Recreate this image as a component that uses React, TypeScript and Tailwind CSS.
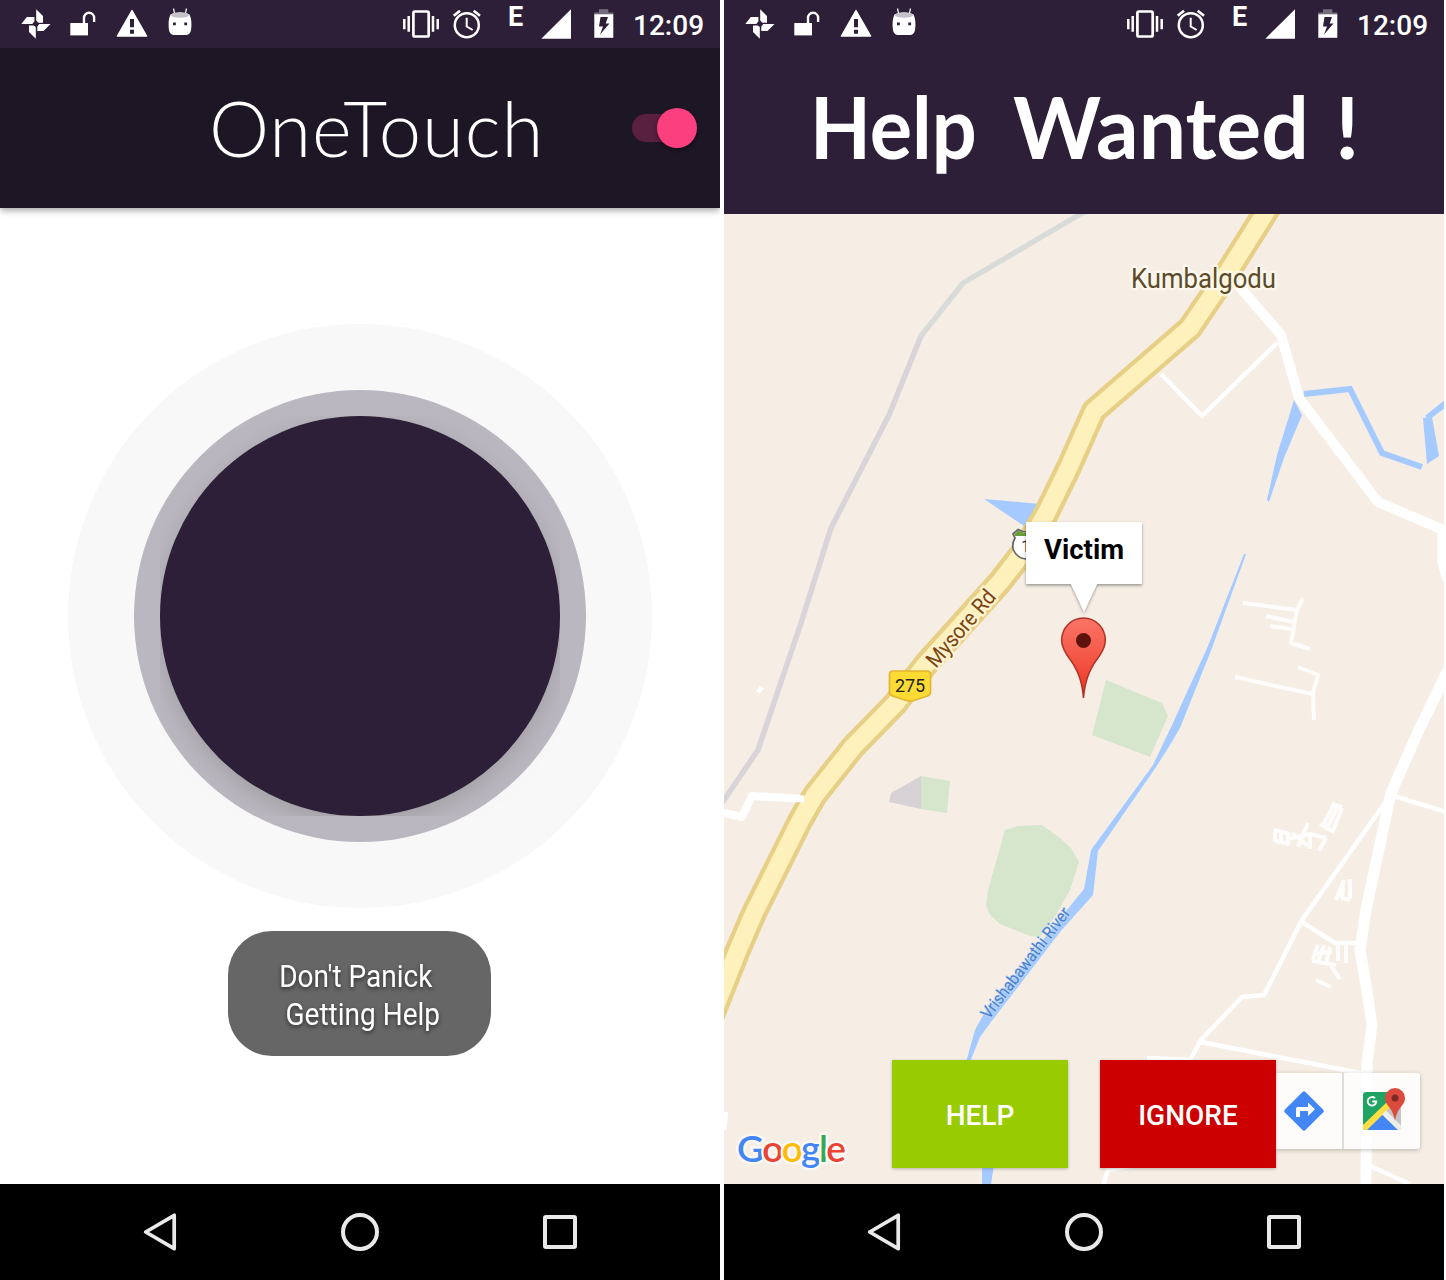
import React from "react";

function StatusBar() {
  return (
    <div className="relative z-20 flex h-12 w-full shrink-0 items-start bg-[#2d1f37] text-white">
      <svg className="ml-5 h-12 w-[176px]" viewBox="20 0 176 48" fill="currentColor">
        <path d="M36.2 9.2 43 16v6.8h-4.6l-2.2-2.4ZM21.3 24l5.5-7h7.600v4.600L32.200 24ZM35.800 38.800 29 32v-6.600h4.600l2.200 1.600ZM50.500 24l-7 7h-6.200v-4.600l2-2.400Z" />
        <path d="M70.300 23h17.700v12.400H70.300Z" />
        <path d="M84 23v-5.200a5 5 0 0 1 10.100 0V22" fill="none" stroke="currentColor" strokeWidth="2.400" />
        <path d="M132 10.600 146.600 36h-29.200Z" stroke="currentColor" strokeWidth="1.400" strokeLinejoin="round" />
        <path d="M130 19h4v8.300h-4ZM130 29.700h4v4h-4Z" fill="#2d1f37" />
        <path d="m173.500 8.500 1.300 6M186.500 8.500l-1.300 6" stroke="currentColor" strokeWidth="1.200" />
        <path d="M170.500 14.500c6-3 13-3 19 0 2 4 2.300 9 1.600 15-.7 4-2.600 5.500-5.600 5.500h-11c-3 0-4.900-1.500-5.600-5.500-.7-6-.4-11 1.600-15Z" />
        <ellipse cx="180" cy="15.300" rx="9" ry="2.500" fill="#c5c1c8" />
        <path d="M173 22.500h2.800v2.800H173ZM184.300 22.500h2.800v2.800h-2.800Z" fill="#2d1f37" />
      </svg>
      <svg className="ml-[206px] h-12 w-[82px]" viewBox="402 0 82 48" fill="none" stroke="currentColor">
        <rect x="413.400" y="11.500" width="15.300" height="25" rx="1.500" strokeWidth="2.700" />
        <path d="M408.700 16v15.700M433 16v15.700M404.300 19v10.300M437.700 19v10.300" strokeWidth="2.500" />
        <circle cx="466.800" cy="25.200" r="12" strokeWidth="2.500" />
        <path d="M466.700 17.700v8.800l6 3.500" strokeWidth="2" />
        <path d="m453.700 15.800 6.300-5M480 15.800l-6.300-5" strokeWidth="2.700" />
      </svg>
      <span className="ml-[24px] mt-[2px] w-5 font-['Roboto'] text-[27px] leading-[30px] font-bold">E</span>
      <svg className="ml-[12px] h-12 w-[76px]" viewBox="540 0 76 48" fill="currentColor">
        <path d="M541.300 38.800 571 9.200v29.600Z" />
        <path d="M594.300 12.500h4.700V9.300h9.300v3.200h5V15h-19Z" opacity=".35" />
        <path d="M594.300 14.300h19v23.500h-19Z" />
        <path d="M600.500 17h7.500l-2.300 6.500h3.800l-9.500 11 3-8h-4Z" fill="#2d1f37" />
      </svg>
      <span className="ml-[17px] mt-[10px] font-['Roboto'] text-[28px] leading-8 font-medium">12:09</span>
    </div>
  );
}

function NavBar() {
  return (
    <div className="flex h-24 w-full shrink-0 items-center bg-black px-[60px] text-[#e9e9e9]">
      <div className="flex flex-1 justify-center">
        <svg className="h-12 w-12" viewBox="136 1208 48 48" fill="none" stroke="currentColor" strokeWidth="3.700" strokeLinejoin="round">
          <path d="M174.200 1215.300v33.400l-28.500-16.700Z" />
        </svg>
      </div>
      <div className="flex flex-1 justify-center">
        <div className="size-[38px] rounded-full border-4 border-[#e9e9e9]" />
      </div>
      <div className="flex flex-1 justify-center">
        <div className="size-[34px] rounded-[3px] border-4 border-[#e9e9e9]" />
      </div>
    </div>
  );
}

function HomeScreen() {
  return (
    <section className="flex h-[1280px] w-[720px] flex-col overflow-hidden bg-white">
      <StatusBar />
      <header className="z-10 flex h-40 w-full shrink-0 items-center bg-[#1d1624] shadow-[0_2px_7px_rgba(0,0,0,0.4)]">
        <h1 className="ml-[209px] w-[423px] whitespace-nowrap font-['Lato'] text-[76px] leading-[88px] font-light tracking-[0.9px] text-white">
          OneTouch
        </h1>
        <div className="relative h-10 w-[65px]">
          <div className="mt-[6px] h-7 w-[60px] rounded-full bg-[#59203f]" />
          <div className="absolute top-0 right-0 size-10 rounded-full bg-[#fc407f] shadow-[0_2px_4px_rgba(0,0,0,0.4)]" />
        </div>
      </header>
      <main className="flex flex-1 flex-col items-center pt-[116px]">
        <div className="flex size-[584px] items-center justify-center rounded-full bg-[#f8f8f8]">
          <div className="flex size-[452px] items-center justify-center rounded-full bg-[#bbb7c1]">
            <div className="size-[400px] overflow-hidden">
              <div className="size-[400px] rounded-full bg-[#2d1f37] shadow-[0_7px_22px_rgba(150,150,150,0.7)]" />
            </div>
          </div>
        </div>
        <div className="mt-[23px] mr-[2px] flex h-[125px] w-[263px] items-center justify-center rounded-[44px] bg-[#666]">
          <p className="origin-center scale-x-[0.875] whitespace-pre pt-[2px] text-center font-['Roboto'] text-[32px] leading-[38px] text-white [text-shadow:0_2px_5px_rgba(0,0,0,0.6)]">
            {"Don't Panick \n Getting Help"}
          </p>
        </div>
      </main>
      <NavBar />
    </section>
  );
}

const ROAD =
  "M1272 202 1228 272 1190 328 1094 411 1069 467 1046 514 1024 551 1000 582 927 663 895 704 853 747 815 795 800 821 777 867 754 913 738 950 724 985 708 1025";

function MapDrawing() {
  return (
    <svg className="h-[970px] w-[720px]" viewBox="724 214 720 970" fill="none">
      <defs>
        <linearGradient id="pin" x1="0" y1="0" x2="0" y2="1">
          <stop offset="0" stopColor="#fb7567" />
          <stop offset=".6" stopColor="#f2503f" />
          <stop offset="1" stopColor="#e8321f" />
        </linearGradient>
        <filter id="lift" x="-20%" y="-20%" width="140%" height="150%">
          <feDropShadow dx="0" dy="1.500" stdDeviation="1.500" floodOpacity=".4" />
        </filter>
      </defs>
      <path d="M724 214h720v970H724Z" fill="#f6eee5" />
      <path d="M1084 212 963 283 921 336" stroke="#d9dbd8" strokeWidth="5.500" />
      <path d="M921 336 889 415 831 528 801 623 758 750 722 803" stroke="#d8d5d9" strokeWidth="5.500" />
      <g fill="#d6e6cd">
        <path d="M1106 680 1162 703 1168 716 1150 757 1092 735ZM921 776 950 781 947 813 921 809Z" />
        <path d="M1005 830 1018 826 1042 825 1060 838 1071 848 1079 862 1070 890 1056 915 1040 937 1030 936 1000 924 990 915 986 905 988 890Z" />
      </g>
      <path d="M921 776 891 793 889 802 921 809Z" fill="#d6d2d5" />
      <g fill="#a5caff">
        <path d="M984 499 1040 504 1030 530ZM1294 400 1302 415 1284 458 1269 502 1267 500 1277 455ZM1423 418 1432 417 1439 456 1427 464Z" />
        <path d="M1244 554 1246 554 1212 648 1180 728 1170 745 1156 767 1098 851 1093 895 1060 932 991 1022 980 1037 970 1062 966 1062 975 1030 982 1017 1058 921 1084 889 1091 850 1153 765 1172 725 1208 646Z" />
        <path d="M982 1165h12l-3 19h-9Z" />
      </g>
      <path d="M1304 394 1350 389 1382 453 1422 467M1446 403 1427 418" stroke="#a5caff" strokeWidth="6" />
      <g stroke="#fff" strokeLinejoin="round">
        <path d="M1232 278 1281 335 1299 398 1378 502 1448 532" strokeWidth="10" />
        <path d="M1441 530v32l5 18" strokeWidth="7" />
        <path d="M1448 670 1418 732 1391 793 1383 830 1366 910 1360 950 1366 985 1372 1025 1367 1063 1366 1184" strokeWidth="11" />
        <path d="M724 813 742 817 752 796 805 799" strokeWidth="8" />
        <g strokeWidth="4.500">
          <path d="M1161 374 1202 416 1277 343M1387 800 1302 920 1264 995 1242 997 1201 1040 1190 1060 1147 1058M1201 1042 1365 1074M1394 796 1446 812M1302 922 1335 943 1356 943M1370 1166 1410 1184M1103 1186 1108 1170 1130 1166" />
          <path d="M726 1112 724 1130M758 692 762 687" />
        </g>
        <g strokeWidth="4" opacity=".85">
          <path d="M1243 603 1297 610M1303 598 1297 610 1291 643 1310 649M1266 616 1294 622M1270 626 1292 629M1298 667 1318 675 1313 693 1314 720M1235 677 1312 694" />
          <path d="M1275 830v12M1281 830v14M1288 832v12M1274 830 1290 834M1276 841 1290 844M1292 833 1308 846M1308 823 1298 847M1288 839 1310 834 1326 838M1310 835v14M1326 838 1319 851M1334 804 1322 827M1338 806 1326 830M1342 808 1332 833M1320 824 1334 832M1332 804 1342 807M1344 880 1336 900M1350 879v20M1343 885 1342 898 1350 900M1318 945 1313 960M1324 945 1318 962M1330 947 1326 964M1313 954 1332 952M1312 961 1336 965M1338 943v18M1346 943v20M1331 966 1340 979M1316 980 1331 987" />
        </g>
      </g>
      <path d={ROAD} stroke="#e7cf86" strokeWidth="26" strokeLinejoin="round" />
      <path d={ROAD} stroke="#fef1bc" strokeWidth="17.500" strokeLinejoin="round" />
      <path d="M785 798 804 799" stroke="#fff" strokeWidth="7" />
      <g fontFamily="Roboto, sans-serif" strokeLinejoin="round" style={{ paintOrder: "stroke" }}>
        <text x="1131" y="288" fontSize="28" textLength="145" lengthAdjust="spacingAndGlyphs" fill="#5b4b2a" stroke="#fffaf0" strokeOpacity=".8" strokeWidth="5">Kumbalgodu</text>
        <text transform="translate(936 669) rotate(-49.500)" fontSize="22" textLength="94" lengthAdjust="spacingAndGlyphs" fill="#7c4510" stroke="#fff3cf" strokeWidth="5">Mysore Rd</text>
        <text transform="translate(989 1020) rotate(-52.500)" fontSize="17" textLength="135" lengthAdjust="spacingAndGlyphs" fill="#4b80ca" stroke="#c3dbfb" strokeOpacity=".6" strokeWidth="2">Vrishabawathi River</text>
      </g>
      <path d="M893 671h34q3.500 0 3.500 3.500V692q0 3-3 4l-13 4.300q-4.500 1.500-9 0L892.500 696q-3-1-3-4V674.500q0-3.500 3.500-3.500Z" fill="#fddb35" stroke="#e4b62e" strokeWidth="1.700" />
      <text x="910" y="692" fontSize="18" textAnchor="middle" fontFamily="Roboto, sans-serif" fill="#222" textLength="30">275</text>
      <path d="M1013 534 1018 529.500Q1024 533 1030 532V559Q1018 560 1013.500 550 1011.500 544 1015 538Z" fill="#fff" stroke="#666" strokeWidth="1.700" />
      <path d="M1014 535 1018 530.500Q1024 533.500 1030 533V536H1015Z" fill="#689f38" />
      <text x="1021" y="552" fontSize="17" fontFamily="Roboto, sans-serif" fill="#333">1</text>
      <path d="M1026 522h116v62h-45l-13 28-13-28h-45Z" fill="#fff" filter="url(#lift)" />
      <text x="1084" y="559" fontSize="27" fontWeight="700" textAnchor="middle" fontFamily="Roboto, sans-serif" fill="#000" textLength="80" lengthAdjust="spacingAndGlyphs">Victim</text>
      <path d="M1083.500 698C1082 676 1074 664 1067 655 1063 649 1061.700 645 1061.700 640a21.800 22 0 0 1 43.600 0C1105.300 645 1104 649 1100 655 1093 664 1085 676 1083.500 698Z" fill="url(#pin)" stroke="#b03226" strokeWidth="1.500" />
      <circle cx="1083.500" cy="640.500" r="7.500" fill="#5e120e" />
    </svg>
  );
}

function DirectionsIcon() {
  return (
    <svg className="size-10" viewBox="0 0 40 40">
      <path d="M18.800.7q1.200-1 2.400 0l18.100 18.100q1 1.200 0 2.400L21.200 39.300q-1.200 1-2.400 0L.7 21.200q-1-1.200 0-2.400Z" fill="#4286f5" />
      <path d="M12 26V17.500q0-1.500 1.500-1.500H24v-4.500l7 6.800-7 6.700V20h-8v6Z" fill="#fff" />
    </svg>
  );
}

function MapsIcon() {
  return (
    <svg className="h-[43px] w-[43px]" viewBox="0 0 43 43">
      <path d="M3 4h32v38H3Q0 42 0 39V7Q0 4 3 4Z" fill="#1fa463" />
      <path d="M38 10v29q0 3-3 3L19 26Z" fill="#c4c4c4" />
      <path d="M3.500 42 19 26.500 34.500 42Z" fill="#4486f4" />
      <path d="M0 37 24 14l3 5.500L4 42H3Q0 42 0 39Z" fill="#ffdd45" />
      <path d="m19 26.500 4-4L38 37.500V39q0 3-3 3Z" fill="#eee" />
      <path d="M12 10.200A4.300 4.300 0 1 0 13.300 13.500H9.300" fill="none" stroke="#fff" strokeWidth="1.800" />
      <path d="M32 33C31 26 28 21 25 17.500 23 15 22 13 22 10a10 10 0 0 1 20 0c0 3-1 5-3 7.500C36 21 33 26 32 33Z" fill="#dc4a3d" />
      <circle cx="32" cy="10" r="3.500" fill="#7c2b25" />
    </svg>
  );
}

function HelpScreen() {
  return (
    <section className="flex h-[1280px] w-[720px] flex-col bg-[#2d1f37]">
      <StatusBar />
      <header className="flex h-[166px] shrink-0 items-start">
        <h1 className="mt-[26px] ml-[86px] flex whitespace-pre font-['Lato'] text-[87px] leading-[104px] font-bold text-white">
          <span className="w-[203px] origin-left scale-x-[0.91]">Help </span>
          <span className="w-[322px] origin-left scale-x-[0.965]">Wanted </span>
          <span>!</span>
        </h1>
      </header>
      <main className="relative h-[970px] w-[720px] overflow-hidden">
        <MapDrawing />
        <div className="absolute inset-x-0 bottom-4 flex h-[108px] items-start">
          <div className="mb-px ml-[13px] w-[155px] self-end whitespace-nowrap font-['Lato'] text-[37px] leading-[38px] font-semibold tracking-[-1.6px] [paint-order:stroke] [-webkit-text-stroke:5px_#fbf7f3]">
            <span className="text-[#4285f4]">G</span>
            <span className="text-[#ea4335]">o</span>
            <span className="text-[#fbbc05]">o</span>
            <span className="text-[#4285f4]">g</span>
            <span className="text-[#34a853]">l</span>
            <span className="text-[#ea4335]">e</span>
          </div>
          <button className="h-[108px] w-44 bg-[#99cc00] pt-[3px] font-['Roboto'] text-[28px] font-medium text-white shadow-[0_1px_3px_rgba(0,0,0,0.25)]">HELP</button>
          <button className="z-10 ml-8 h-[108px] w-44 bg-[#cc0000] pt-[3px] font-['Roboto'] text-[28px] font-medium text-white shadow-[0_1px_3px_rgba(0,0,0,0.25)]">IGNORE</button>
          <div className="mt-[13px] flex h-[76px] w-36 rounded-r-[3px] bg-white/80 shadow-[0_1px_4px_rgba(0,0,0,0.25)]">
            <div className="flex w-[68px] items-center border-r-2 border-[#dedbd8] pl-2">
              <DirectionsIcon />
            </div>
            <div className="flex flex-1 items-start pt-[15px] pl-[19px]">
              <MapsIcon />
            </div>
          </div>
        </div>
      </main>
      <NavBar />
    </section>
  );
}

export default function App() {
  return (
    <div className="flex h-[1280px] w-[1446px] gap-1 overflow-hidden bg-white">
      <HomeScreen />
      <HelpScreen />
    </div>
  );
}
